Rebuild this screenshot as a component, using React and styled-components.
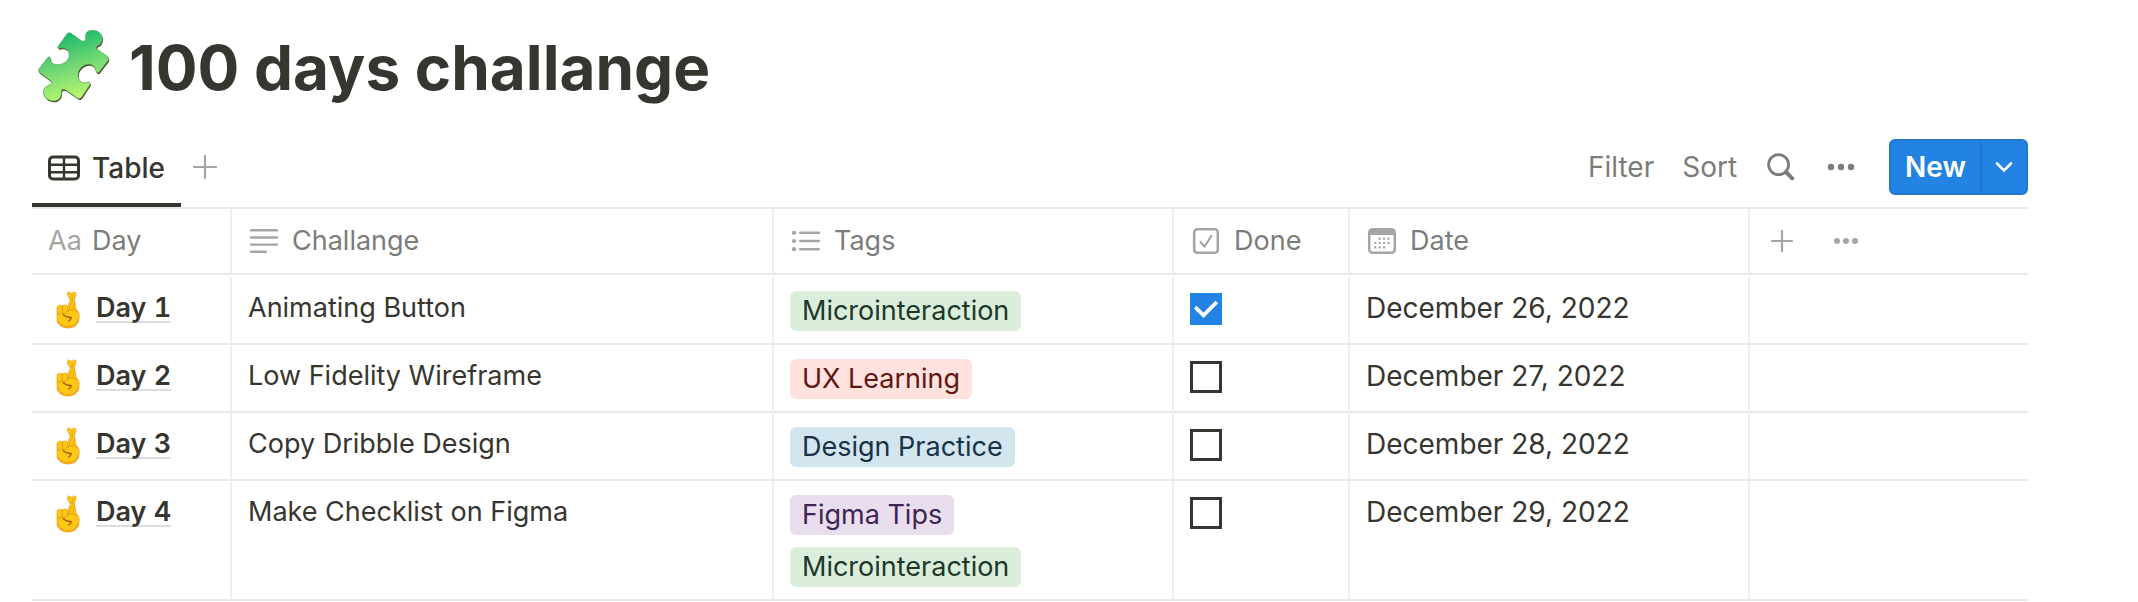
import React, { useState } from "react";
import styled, { createGlobalStyle } from "styled-components";

const GlobalStyle = createGlobalStyle`
  * {
    box-sizing: border-box;
  }
  body {
    margin: 0;
    background: #ffffff;
    color: #37352f;
    font-family: Inter, "Liberation Sans", sans-serif;
    font-size: 28px;
    line-height: 34px;
  }
  button {
    font: inherit;
    color: inherit;
    border: 0;
    padding: 0;
    background: none;
    cursor: pointer;
  }
  svg {
    display: block;
    flex-shrink: 0;
  }
`;

const Page = styled.main`
  padding: 20px 110px 0 32px;
`;

const Title = styled.h1`
  display: flex;
  align-items: center;
  gap: 18px;
  margin: 0 0 12px;
  padding-left: 5px;
  font-size: 62px;
  font-weight: 700;
  line-height: 95px;
`;

const Toolbar = styled.div`
  display: flex;
  align-items: center;
  justify-content: space-between;
  height: 80px;
`;

const Tabs = styled.div`
  display: flex;
  align-self: stretch;
  align-items: center;
  gap: 12px;
`;

const Tab = styled.button`
  display: flex;
  align-items: center;
  gap: 12px;
  height: 80px;
  padding: 6px 16px 0;
  font-weight: 500;
  border-bottom: 4px solid #37352f;
`;

const Actions = styled.div`
  display: flex;
  align-items: center;
  gap: 28px;
  color: #7d7c78;
`;

const IconButton = styled.button`
  display: flex;
  align-items: center;
  justify-content: center;
  width: ${(p) => p.$width || 24}px;
  height: 56px;
  color: ${(p) => (p.$light ? "#a5a5a1" : "inherit")};
`;

const NewGroup = styled.div`
  display: flex;
  height: 56px;
  margin-left: 4px;
  border: 2px solid #2478cb;
  border-radius: 6px;
  background: #2383e2;
  color: #ffffff;
`;

const NewButton = styled.button`
  padding: 0 14px;
  font-weight: 600;
`;

const NewMenu = styled.button`
  display: flex;
  align-items: center;
  justify-content: center;
  width: 46px;
  border-left: 2px solid #2478cb;
`;

const Grid = styled.table`
  width: 100%;
  table-layout: fixed;
  border-collapse: separate;
  border-spacing: 0;
  border-top: 2px solid #e9e9e7;
  font-size: 27px;

  /* the column rules start just under the header line */
  tbody::before {
    content: "";
    display: block;
    height: 2px;
  }
`;

const Col = styled.col`
  width: ${(p) => (p.$width ? p.$width + "px" : "auto")};
`;

const HeadCell = styled.th`
  height: 66px;
  padding: ${(p) => (p.$flush ? "0" : "0 16px")};
  border-bottom: 2px solid #e9e9e7;
  border-right: ${(p) => (p.$flush ? "0" : "2px solid #eeeeec")};
  color: #7d7c78;
  font-weight: 400;
  text-align: left;
`;

const HeadLabel = styled.div`
  display: flex;
  align-items: center;
  gap: ${(p) => (p.$flush ? 0 : 12)}px;

  > svg {
    color: #a5a5a1;
  }
`;

const TextIcon = styled.span`
  width: 32px;
  color: #a5a5a1;
`;

const Cell = styled.td`
  padding: 14px 16px 12px;
  vertical-align: top;
  border-bottom: 2px solid #e9e9e7;
  border-right: 2px solid #eeeeec;

  &:last-child {
    border-right: 0;
  }
`;

const DateCell = styled(Cell)`
  font-size: 28px;
`;

const DayCell = styled.div`
  display: flex;
  gap: 8px;
`;

const DayLink = styled.a`
  color: inherit;
  font-weight: 600;
  font-variant-numeric: tabular-nums;
  text-decoration: underline;
  text-decoration-color: #dcdcda;
  text-decoration-thickness: 2px;
  text-decoration-skip-ink: none;
  text-underline-offset: 4px;
`;

const TagList = styled.div`
  display: flex;
  flex-wrap: wrap;
  gap: 12px;
`;

const tagColors = {
  green: { background: "#dbeddb", text: "#1c3829" },
  red: { background: "#ffe2dd", text: "#5d1715" },
  blue: { background: "#d3e5ef", text: "#183347" },
  purple: { background: "#e8deee", text: "#412454" },
};

const Tag = styled.span`
  padding: 0 12px;
  border-radius: 6px;
  line-height: 40px;
  white-space: nowrap;
  background: ${(p) => tagColors[p.$color].background};
  color: ${(p) => tagColors[p.$color].text};
`;

const CheckLabel = styled.label`
  display: grid;
  width: 32px;
  margin-top: 2px;

  > * {
    grid-area: 1 / 1;
  }
  > svg {
    pointer-events: none;
  }
`;

const CheckInput = styled.input`
  appearance: none;
  width: 32px;
  height: 32px;
  margin: 0;
  border: 3px solid #37352f;
  cursor: pointer;

  &:checked {
    border: 0;
    background: #2383e2;
  }
`;

function PuzzleIcon() {
  const shape =
    "M27 147 L55 111 Q59 107 62 113 C62 128 72 134 86 133 C105 132 119 118 119 104 C119 91 109 82 96 83 L87 84 Q82 82 86 77 L112 41 Q117 35 124 39 L155 61 Q166 66 168 57 C166 44 168 30 188 30 C207 30 219 42 218 57 C217 70 208 75 202 78 Q198 83 204 88 L233 108 Q239 113 236 120 L208 156 Q203 160 199 153 C197 139 187 131 175 132 C158 134 145 148 145 165 C146 180 154 187 166 188 L176 185 Q183 186 181 193 L156 231 Q150 238 143 233 L108 209 Q95 203 95 214 C96 231 88 242 70 242 C53 240 39 228 41 212 C43 201 52 198 62 192 Q70 186 63 181 L29 156 Q24 152 27 147 Z";
  return (
    <svg width="74" height="76" viewBox="22 29 222 228">
      <defs>
        <linearGradient id="puzzle" x1="0.35" y1="0" x2="0.65" y2="1">
          <stop offset="0" stopColor="#0fb56b" />
          <stop offset="0.5" stopColor="#72d873" />
          <stop offset="1" stopColor="#c5fc72" />
        </linearGradient>
      </defs>
      <path d={shape} fill="#4b4427" transform="translate(2 4)" />
      <path d={shape} fill="url(#puzzle)" stroke="#4fa34b" strokeWidth="2" />
    </svg>
  );
}

function FingersIcon() {
  return (
    <svg width="40" height="40" viewBox="84 93 120 120">
      <path
        d="M111 146 C110 136 119 134 127 138 C131 133 141 134 143 140 L151 120 C144 110 140 102 143 98 C146 94 152 96 155 102 C158 95 165 94 168 99 C170 105 163 114 164 124 L169 150 C177 153 179 164 177 176 C175 194 162 204 145 204 C127 204 113 195 111 178 Z"
        fill="#fdc716"
        stroke="#e8a01a"
        strokeWidth="2"
      />
      <path
        d="M112 180 C116 194 128 201 145 201 C160 201 173 192 175 178"
        fill="none"
        stroke="#f7a51b"
        strokeWidth="5"
      />
      <path
        d="M155 102 C161 111 158 123 151 136 L147 151 M151 120 L155 110 M164 124 L159 145"
        fill="none"
        stroke="#eba51a"
        strokeWidth="3"
      />
      <path
        d="M127 138 L127 160 M143 140 L143 153 M112 160 C119 164 125 160 127 158 C132 163 139 161 143 153 C153 147 169 148 171 155"
        fill="none"
        stroke="#e39a14"
        strokeWidth="3"
        strokeLinecap="round"
      />
      <path
        d="M130 164 C137 171 146 172 154 173 C153 178 149 181 146 183"
        fill="none"
        stroke="#a75a0c"
        strokeWidth="4"
        strokeLinecap="round"
      />
    </svg>
  );
}

const TableIcon = () => (
  <svg width="32" height="32" viewBox="0 0 32 32" fill="none" stroke="currentColor">
    <rect x="1.5" y="5" width="29" height="22" rx="3.5" strokeWidth="3" />
    <path d="M2 12.8h28M2 20.2h28M16 5v22" strokeWidth="2.4" />
  </svg>
);

const PlusIcon = ({ size = 24 }) => (
  <svg width={size} height={size} viewBox={`0 0 ${size} ${size}`} stroke="currentColor">
    <path
      d={`M1 ${size / 2}H${size - 1}M${size / 2} 1V${size - 1}`}
      strokeWidth="2.2"
      strokeLinecap="round"
    />
  </svg>
);

const DotsIcon = ({ r = 3, step = 9 }) => (
  <svg width="28" height="28" viewBox="0 0 28 28" fill="currentColor">
    <circle cx={14 - step} cy="14" r={r} />
    <circle cx="14" cy="14" r={r} />
    <circle cx={14 + step} cy="14" r={r} />
  </svg>
);

const SearchIcon = () => (
  <svg width="28" height="28" viewBox="0 0 28 28" fill="none" stroke="currentColor">
    <circle cx="11.6" cy="11.6" r="10" strokeWidth="2.8" />
    <path d="M19 19l6.2 6.4" strokeWidth="4" strokeLinecap="round" />
  </svg>
);

const ChevronIcon = () => (
  <svg width="18" height="18" viewBox="0 0 18 18" fill="none" stroke="currentColor">
    <path d="M2 5.5l7 7 7-7" strokeWidth="2.6" strokeLinecap="round" />
  </svg>
);

const LinesIcon = () => (
  <svg width="32" height="32" viewBox="0 0 32 32" fill="currentColor">
    <rect x="2" y="4" width="28" height="2.4" rx="1" />
    <rect x="2" y="11.3" width="28" height="2.4" rx="1" />
    <rect x="2" y="18.4" width="28" height="2.4" rx="1" />
    <rect x="2" y="25.6" width="17" height="2.4" rx="1" />
  </svg>
);

const ListIcon = () => (
  <svg width="32" height="32" viewBox="0 0 32 32" fill="currentColor">
    {[7.8, 16, 24.2].map((y) => (
      <g key={y}>
        <circle cx="4" cy={y} r="2.1" />
        <rect x="9" y={y - 1.3} width="21" height="2.6" rx="1.2" />
      </g>
    ))}
  </svg>
);

const CheckboxIcon = () => (
  <svg width="32" height="32" viewBox="0 0 32 32" fill="none" stroke="currentColor">
    <rect x="4.2" y="4.2" width="23.6" height="23.6" rx="3" strokeWidth="2.6" />
    <path
      d="M10.6 17l3.8 4.6L21.4 11"
      strokeWidth="2.2"
      strokeLinecap="round"
      strokeLinejoin="round"
    />
  </svg>
);

const calendarDots = [
  [13.7, 13.7], [18.1, 13.7], [22.6, 13.7],
  [9.2, 18], [13.7, 18], [18.1, 18], [22.6, 18],
  [9.2, 22.4], [13.7, 22.4], [18.1, 22.4],
];

const CalendarIcon = () => (
  <svg width="32" height="32" viewBox="0 0 32 32" fill="currentColor">
    <rect
      x="3.2"
      y="4.2"
      width="25.6"
      height="23.6"
      rx="3.4"
      fill="none"
      stroke="currentColor"
      strokeWidth="2.5"
    />
    <path d="M3 10V7q0-3 3-3h20q3 0 3 3v3z" />
    {calendarDots.map(([x, y]) => (
      <rect key={`${x}-${y}`} x={x - 1.1} y={y - 1.1} width="2.2" height="2.2" rx="0.6" />
    ))}
  </svg>
);

const CheckMark = () => (
  <svg width="32" height="32" viewBox="0 0 32 32" fill="none" stroke="#ffffff">
    <path d="M5.2 14.2l8.3 8.2L26.8 9" strokeWidth="3.8" />
  </svg>
);

const columns = [
  { name: "Day", icon: <TextIcon>Aa</TextIcon>, width: 200 },
  { name: "Challange", icon: <LinesIcon />, width: 542 },
  { name: "Tags", icon: <ListIcon />, width: 400 },
  { name: "Done", icon: <CheckboxIcon />, width: 176 },
  { name: "Date", icon: <CalendarIcon />, width: 400 },
];

const initialRows = [
  {
    day: "Day 1",
    challange: "Animating Button",
    tags: [["Microinteraction", "green"]],
    done: true,
    date: "December 26, 2022",
  },
  {
    day: "Day 2",
    challange: "Low Fidelity Wireframe",
    tags: [["UX Learning", "red"]],
    done: false,
    date: "December 27, 2022",
  },
  {
    day: "Day 3",
    challange: "Copy Dribble Design",
    tags: [["Design Practice", "blue"]],
    done: false,
    date: "December 28, 2022",
  },
  {
    day: "Day 4",
    challange: "Make Checklist on Figma",
    tags: [
      ["Figma Tips", "purple"],
      ["Microinteraction", "green"],
    ],
    done: false,
    date: "December 29, 2022",
  },
];

function App() {
  const [rows, setRows] = useState(initialRows);

  const toggle = (day) =>
    setRows(rows.map((r) => (r.day === day ? { ...r, done: !r.done } : r)));

  return (
    <>
      <GlobalStyle />
      <Page>
        <Title>
          <PuzzleIcon />
          100 days challange
        </Title>
        <Toolbar>
          <Tabs>
            <Tab>
              <TableIcon />
              Table
            </Tab>
            <IconButton $light aria-label="Add view">
              <PlusIcon />
            </IconButton>
          </Tabs>
          <Actions>
            <button>Filter</button>
            <button>Sort</button>
            <IconButton $width={32} aria-label="Search">
              <SearchIcon />
            </IconButton>
            <IconButton $width={32} aria-label="More">
              <DotsIcon r={3.2} step={10} />
            </IconButton>
            <NewGroup>
              <NewButton>New</NewButton>
              <NewMenu aria-label="New options">
                <ChevronIcon />
              </NewMenu>
            </NewGroup>
          </Actions>
        </Toolbar>
        <Grid>
          <colgroup>
            {columns.map((c) => (
              <Col key={c.name} $width={c.width} />
            ))}
            <Col />
          </colgroup>
          <thead>
            <tr>
              {columns.map((c) => (
                <HeadCell key={c.name} scope="col">
                  <HeadLabel>
                    {c.icon}
                    {c.name}
                  </HeadLabel>
                </HeadCell>
              ))}
              <HeadCell $flush>
                <HeadLabel $flush>
                  <IconButton $width={64} $light aria-label="Add column">
                    <PlusIcon size={22} />
                  </IconButton>
                  <IconButton $width={64} $light aria-label="Column options">
                    <DotsIcon />
                  </IconButton>
                </HeadLabel>
              </HeadCell>
            </tr>
          </thead>
          <tbody>
            {rows.map((row) => (
              <tr key={row.day}>
                <Cell>
                  <DayCell>
                    <FingersIcon />
                    <DayLink href="#">{row.day}</DayLink>
                  </DayCell>
                </Cell>
                <Cell>{row.challange}</Cell>
                <Cell>
                  <TagList>
                    {row.tags.map(([name, color]) => (
                      <Tag key={name} $color={color}>
                        {name}
                      </Tag>
                    ))}
                  </TagList>
                </Cell>
                <Cell>
                  <CheckLabel>
                    <CheckInput
                      type="checkbox"
                      aria-label={`${row.day} done`}
                      checked={row.done}
                      onChange={() => toggle(row.day)}
                    />
                    {row.done && <CheckMark />}
                  </CheckLabel>
                </Cell>
                <DateCell>{row.date}</DateCell>
                <Cell />
              </tr>
            ))}
          </tbody>
        </Grid>
      </Page>
    </>
  );
}

export default App;
